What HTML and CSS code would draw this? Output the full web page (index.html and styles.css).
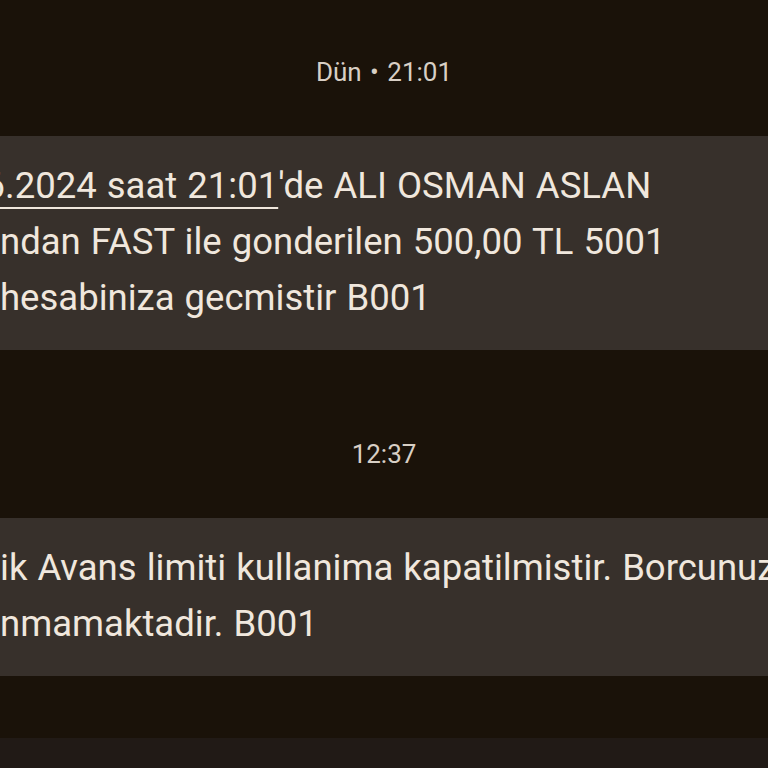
FILE: index.html
```html
<!DOCTYPE html>
<html lang="tr">
<head>
    <meta charset="UTF-8">
    <meta name="viewport" content="width=device-width, initial-scale=1.0">
    <title>Mesajlar</title>
    <link rel="stylesheet" href="styles.css">
</head>
<body>
    <div class="thread">
        <div class="stamp first">Dün • 21:01</div>
        <div class="bubble">
            <p class="msg-text cut"><span class="link">06.2024 saat 21:01</span>'de ALI OSMAN ASLAN<br>ndan FAST ile gonderilen 500,00 TL 5001<br>hesabiniza gecmistir B001</p>
        </div>

        <div class="stamp">12:37</div>
        <div class="bubble">
            <p class="msg-text">ik Avans limiti kullanima kapatilmistir. Borcunuz<br>nmamaktadir. B001</p>
        </div>

        <div class="bubble next"></div>
    </div>
</body>
</html>
```

FILE: styles.css
```css
body {
    margin: 0;
    background: #1a1209;
    font-family: Roboto, 'Noto Sans', sans-serif;
    height: 768px;
    overflow: hidden;
}
.thread {
    display: flex;
    flex-direction: column;
}
.stamp {
    text-align: center;
    font-size: 26px;
    line-height: 32px;
    color: #d8cfc5;
    padding: 88px 0 48px;
    word-spacing: 2px;
}
.stamp.first {
    padding-top: 56px;
}
.bubble {
    background: #37302b;
    overflow: hidden;
    padding: 22px 0 24px;
}
.msg-text {
    margin: 0;
    font-size: 36.5px;
    line-height: 56px;
    color: #f0e7dd;
    white-space: nowrap;
    word-spacing: 1px;
}
.msg-text.cut {
    text-indent: -36px;
}
.link {
    text-decoration: underline;
    text-decoration-thickness: 2px;
    text-underline-offset: 9px;
}
.bubble.next {
    margin-top: 62px;
    background: #211a16;
    height: 40px;
    padding: 0;
}
```
